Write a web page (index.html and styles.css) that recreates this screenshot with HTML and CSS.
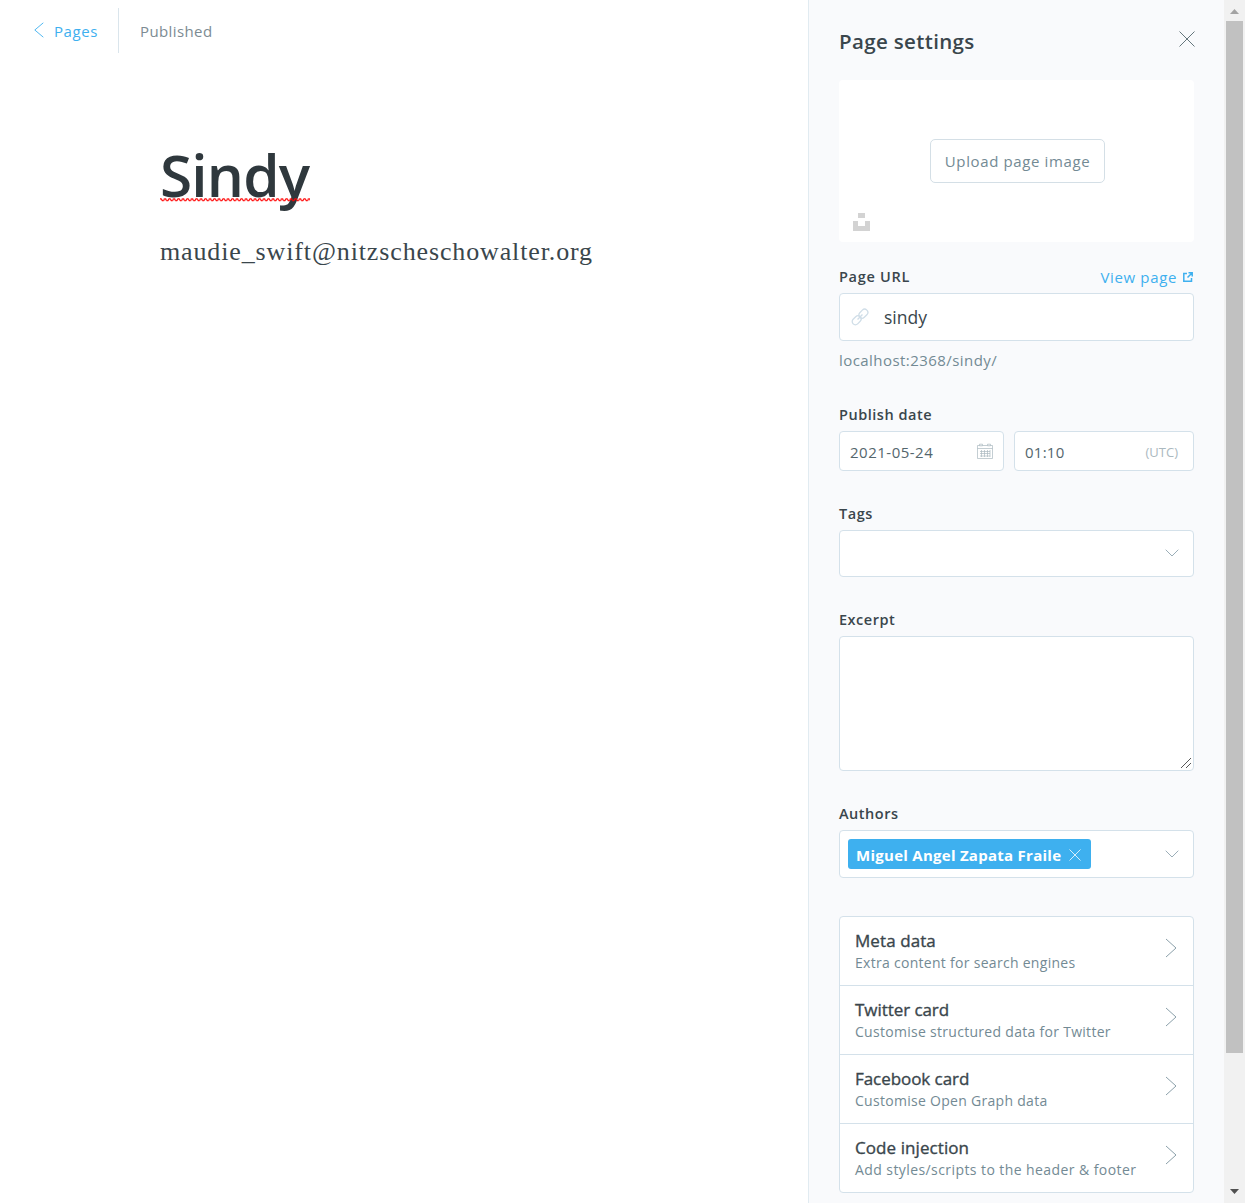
FILE: index.html
```html
<!DOCTYPE html>
<html lang="en">
<head>
<meta charset="utf-8">
<title>Sindy</title>
<link rel="stylesheet" href="styles.css">
</head>
<body>
<div class="app">
  <main class="editor">
    <header class="topbar">
      <a class="back"><svg class="back-icon" width="10" height="16" viewBox="0 0 10 16"><path d="M9.300.8.8 8l8.500 7.200"/></svg><span>Pages</span></a>
      <span class="status">Published</span>
    </header>
    <article class="post">
      <h1 class="title">Sindy<svg class="squiggle" width="150" height="4"><defs><pattern id="wave" width="4.500" height="4" patternUnits="userSpaceOnUse"><path d="M-1.200 .9H1.100L2.250 2.800H3.400L4.500 .9H5.600"/></pattern></defs><rect width="150" height="4" fill="url(#wave)"/></svg></h1>
      <p class="content">maudie_swift@nitzscheschowalter.org</p>
    </article>
  </main>

  <aside class="settings">
    <header class="settings-head">
      <h2>Page settings</h2>
      <svg class="close" width="16" height="16" viewBox="0 0 16 16"><path d="m.5.5 15 15m0-15-15 15"/></svg>
    </header>

    <section class="uploader">
      <button class="upload">Upload page image</button>
      <svg class="unsplash" width="17" height="18" viewBox="0 0 17 18"><path d="M5 0h7v5H5zM0 8h5v5h7V8h5v10H0z"/></svg>
    </section>

    <div class="field url">
      <div class="label-row">
        <label class="url-label">Page URL</label>
        <a class="view"><span>View page</span><svg width="10" height="10" viewBox="0 0 10 10"><path d="M4 1.500H.8v7.700h7.700V6M5.500.8h3.700v3.700M9 1 4.500 5.500"/></svg></a>
      </div>
      <div class="input slug"><svg width="18" height="18" viewBox="0 0 18 18"><g transform="rotate(-45 9 9)"><rect x="-.7" y="5.800" width="10" height="6.400" rx="3.200"/><rect x="8.700" y="5.800" width="10" height="6.400" rx="3.200"/><path d="M5.500 9h7"/></g></svg><span>sindy</span></div>
      <p class="hint">localhost:2368/sindy/</p>
    </div>

    <div class="field date">
      <label>Publish date</label>
      <div class="date-row">
        <div class="input day"><span>2021-05-24</span><svg width="16" height="16" viewBox="0 0 16 16"><path d="M.5 2.500h15v13H.5zM.5 5.500h15M3 8.500h10M3 10.500h10M3 13h10M4.500 7v7M7.500 7v7M10.500 7v7M13 7v7"/><path class="rings" d="M2.500 1.200h3v1.600h-3zM10.500 1.200h3v1.600h-3z"/></svg></div>
        <div class="input time"><span>01:10</span><small>(UTC)</small></div>
      </div>
    </div>

    <div class="field tags">
      <label>Tags</label>
      <div class="input select"><svg class="chev" width="14" height="8" viewBox="0 0 14 8"><path d="M.7.700 7 7 13.300.7"/></svg></div>
    </div>

    <div class="field">
      <label>Excerpt</label>
      <div class="input area"><svg width="10" height="10" viewBox="0 0 10 10"><path d="M0 10 10 0M5 10l5-5"/></svg></div>
    </div>

    <div class="field">
      <label>Authors</label>
      <div class="input select authors"><span class="token"><span>Miguel Angel Zapata Fraile</span><svg width="12" height="12" viewBox="0 0 12 12"><path d="m.5.500 11 11m0-11-11 11"/></svg></span><svg class="chev" width="14" height="8" viewBox="0 0 14 8"><path d="M.7.700 7 7 13.300.7"/></svg></div>
    </div>

    <nav class="menu">
      <a><span class="menu-text"><b>Meta data</b><span class="desc">Extra content for search engines</span></span><svg class="arrow" width="12" height="20" viewBox="0 0 12 20"><path d="m1 1 10 9L1 19"/></svg></a>
      <a><span class="menu-text"><b class="tight">Twitter card</b><span class="desc">Customise structured data for Twitter</span></span><svg class="arrow" width="12" height="20" viewBox="0 0 12 20"><path d="m1 1 10 9L1 19"/></svg></a>
      <a><span class="menu-text"><b class="tight">Facebook card</b><span class="desc">Customise Open Graph data</span></span><svg class="arrow" width="12" height="20" viewBox="0 0 12 20"><path d="m1 1 10 9L1 19"/></svg></a>
      <a><span class="menu-text"><b>Code injection</b><span class="desc wide">Add styles/scripts to the header &amp; footer</span></span><svg class="arrow" width="12" height="20" viewBox="0 0 12 20"><path d="m1 1 10 9L1 19"/></svg></a>
    </nav>
  </aside>

  <div class="scrollbar">
    <svg width="21" height="21" viewBox="0 0 21 21"><path fill="#a3a3a3" d="M6 14l4.500-5 4.500 5z"/></svg>
    <div class="thumb"></div>
    <svg width="21" height="21" viewBox="0 0 21 21"><path fill="#505050" d="M6 7l4.500 5L15 7z"/></svg>
  </div>
</div>
</body>
</html>
```

FILE: styles.css
```css
* { box-sizing: border-box; }
body, h1, h2, p { margin: 0; font-weight: 400; }
body { font: 15px/20px "Open Sans", sans-serif; color: #3a464c; background: #fff; overflow: hidden; }
svg { display: block; flex: none; fill: none; }
span { white-space: nowrap; }
.app { display: flex; height: 1203px; }

.editor { flex: 1; min-width: 0; }
.topbar { display: flex; align-items: center; height: 45px; margin-top: 8px; letter-spacing: .5px; color: #7c8b93; }
.back { display: flex; align-items: center; gap: 10px; width: 119px; height: 45px; padding-left: 34px; border-right: 1px solid #dae5ec; letter-spacing: .6px; color: #3eb0ef; }
.back-icon { margin-top: -1px; stroke: #3eb0ef; stroke-width: .9; }
.status { padding-left: 21px; letter-spacing: .4px; }
.post { padding: 81px 0 0 160px; }
.title { position: relative; height: 80px; font-size: 58.500px; line-height: 80px; letter-spacing: -.8px; font-weight: 600; color: #2f383d; }
.squiggle { position: absolute; left: 0; top: 64px; }
.squiggle path { stroke: #f00; stroke-width: 1.100; }
.content { margin-top: 22px; font: 26px/32px "Liberation Serif", serif; letter-spacing: .87px; color: #3a464c; }

.settings { width: 416px; padding: 0 30px; border-left: 1px solid #e1ebf1; background: #f9fafc; overflow: hidden; }
.settings-head { display: flex; justify-content: space-between; align-items: flex-start; height: 80px; }
.settings-head h2 { padding-top: 27px; font-size: 20.500px; line-height: 28px; letter-spacing: .35px; font-weight: 600; }
.close { margin: 30.500px -.5px 0 0; stroke: #54666d; stroke-width: .9; }

.uploader { position: relative; display: flex; align-items: center; justify-content: center; height: 162px; padding-left: 2px; border-radius: 4px; background: #fff; }
.upload { width: 175px; height: 44px; padding: 0; border: 1px solid #d4dfe6; border-radius: 5px; background: #fff; font: inherit; letter-spacing: .62px; color: #738a94; }
.unsplash { position: absolute; left: 14px; top: 133px; fill: #d3d3d3; }

.field { margin-top: 33px; }
.field label { display: block; height: 20px; margin-bottom: 6px; font-weight: 600; font-size: 14.500px; letter-spacing: .52px; }
.field .url-label { letter-spacing: .7px; }
.input { display: flex; align-items: center; border: 1px solid #d4e1ea; border-radius: 4px; background: #fff; }
.url { margin-top: 25px; }
.label-row { display: flex; justify-content: space-between; }
.view { display: flex; align-items: center; height: 20px; margin-right: 1px; gap: 6px; letter-spacing: .65px; color: #3eb0ef; }
.view svg { stroke: #3eb0ef; stroke-width: 1.500; }
.slug { height: 48px; padding-left: 11px; gap: 15px; font-size: 17.500px; }
.slug svg { stroke: #d0dee8; stroke-width: 1.300; }
.hint { margin-top: 9px; height: 21px; letter-spacing: .44px; color: #738a94; }
.date { margin-top: 34px; }
.date-row { display: flex; gap: 10px; }
.date-row .input { height: 40px; justify-content: space-between; padding: 2px 10px 0; color: #54666d; }
.day { width: 165px; letter-spacing: .5px; }
.day svg { margin-top: -3px; stroke: #abb9c0; stroke-width: .7; }
.rings { fill: #fff; }
.time { width: 180px; letter-spacing: .25px; }
.time small { font-size: 13px; padding-right: 5px; letter-spacing: 0; color: #abb9c0; }
.select { height: 47px; justify-content: space-between; padding: 0 14px 0 8px; }
.chev { margin-top: -1px; margin-left: auto; stroke: #9baeb8; }
.area { height: 135px; align-items: flex-end; justify-content: flex-end; padding: 2px; }
.area svg { stroke: #444; stroke-width: .9; }
.authors { height: 48px; }
.token { display: flex; align-items: center; gap: 8px; width: 243px; height: 30px; padding: 2px 8px 0; border-radius: 3px; background: #3eb0ef; letter-spacing: .27px; color: #fff; font-weight: 700; }
.token svg { stroke: #d5eefb; }

.menu { margin-top: 38px; border: 1px solid #d4e1ea; border-radius: 4px; background: #fff; }
.menu a { display: flex; justify-content: space-between; height: 69px; padding: 13px 16px 0 15px; border-bottom: 1px solid #d4e1ea; }
.menu a:last-child { height: 68px; border-bottom: 0; }
.menu-text { display: flex; flex-direction: column; }
.menu b { height: 22px; font-size: 17px; line-height: 22px; font-weight: 400; letter-spacing: .08px; -webkit-text-stroke: .35px; }
.menu .tight { letter-spacing: -.06px; }
.desc { font-size: 14px; line-height: 22px; letter-spacing: .29px; color: #738a94; }
.wide { letter-spacing: .42px; }
.arrow { margin-top: 8px; stroke: #8ba0aa; }

.scrollbar { display: flex; flex-direction: column; width: 21px; background: #f1f1f1; }
.thumb { height: 1032px; margin: 0 2px auto; background: #c1c1c1; }
```
